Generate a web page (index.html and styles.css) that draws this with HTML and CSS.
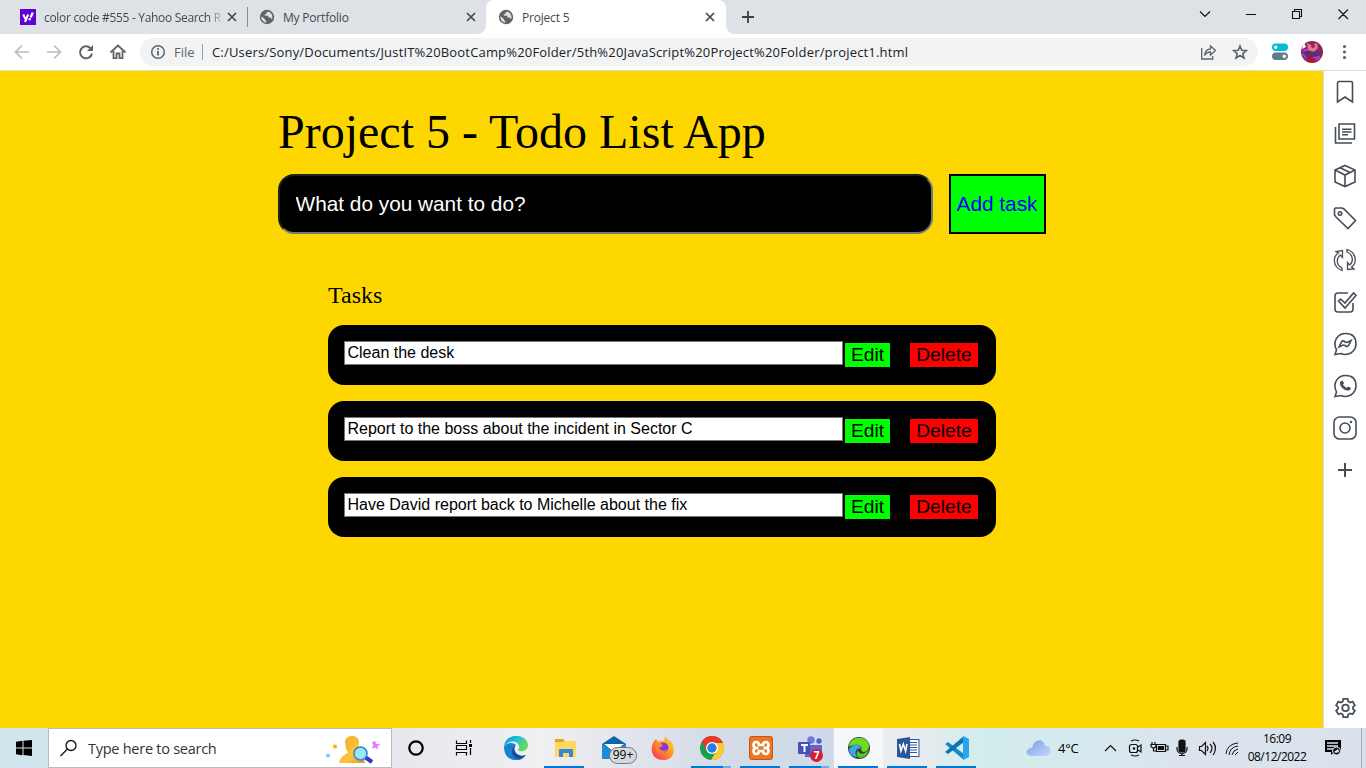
FILE: index.html
```html
<!DOCTYPE html>
<html lang="en">
<head>
<meta charset="utf-8">
<title>Project 5</title>
<link rel="stylesheet" href="styles.css">
</head>
<body>
<svg class="defs" width="0" height="0">
  <defs>
    <symbol id="globe" viewBox="0 0 16 16"><circle cx="8" cy="8" r="7.2" fill="#5f6368"/><path d="M9 2.500 7.300 4v1.300H5.800v1.500h3.600v1.700h1.700c.7 0 1 .6 1 1.200h1.200A5.800 5.800 0 0 0 9 2.500M2.400 7.200 6 10.300v.9L7.300 12v1.700A5.700 5.700 0 0 1 2.400 7.200" fill="#dee1e6"/></symbol>
    <symbol id="close" viewBox="0 0 10 10"><path d="m1 1 8 8M9 1 1 9" stroke="#45494d" stroke-width="1.7"/></symbol>
  </defs>
</svg>
<div class="screen">
  <header class="tabs">
    <div class="tab tab-first">
      <svg width="16" height="16" class="favicon"><rect width="16" height="16" fill="#5f01d1"/><path d="m3.200 5.500 2.300 4.500M8.200 5.500 5 13" stroke="#fff" stroke-width="2" fill="none"/><path d="m12.800 3.500-2.200 5" stroke="#fff" stroke-width="2.2"/><circle cx="9.700" cy="10.300" r="1.200" fill="#fff"/></svg>
      <span class="tab-title faded">color code #555 - Yahoo Search R</span>
      <svg class="x"><use href="#close"/></svg>
    </div>
    <i class="tab-rule"></i>
    <div class="tab tab-second">
      <svg class="favicon" width="16" height="16"><use href="#globe"/></svg>
      <span class="tab-title">My Portfolio</span>
      <svg class="x"><use href="#close"/></svg>
    </div>
    <div class="tab tab-active">
      <svg class="favicon" width="16" height="16"><use href="#globe"/></svg>
      <span class="tab-title">Project 5</span>
      <svg class="x"><use href="#close"/></svg>
    </div>
    <svg class="new-tab" width="12" height="12"><path d="M6 0v12M0 6h12" stroke="#3c4043" stroke-width="1.8"/></svg>
    <svg class="window-controls" width="160" height="34" fill="none" stroke="#111" stroke-width="1.1"><path d="m6 11.500 5 5 5-5M52 14.500h10M98.500 11.500h7v7h-7zM100.500 11V9.500h7v7H106M144.500 9.500l9.500 9.500M154 9.500 144.500 19"/></svg>
  </header>
  <div class="toolbar">
    <svg class="nav-icons" width="140" height="36" fill="none" stroke-width="1.7"><g stroke="#babcbe"><path d="M29 18H16M22 11.500 15.500 18l6.500 6.500M47 18h13M54 11.500l6.500 6.500-6.500 6.500"/></g><path d="M90.500 14.200a6 6 0 1 0 1.500 5.300" stroke="#5f6368" stroke-width="2"/><path d="M93 11v6h-6z" fill="#5f6368"/><path d="M113.500 17v7.200h3V19.500h3v4.700h3V17M110.500 18.500l7.500-7 7.500 7" stroke="#5f6368" stroke-width="1.8"/></svg>
    <div class="address">
      <svg class="info" width="16" height="16" fill="none" stroke="#5f6368" stroke-width="1.500"><circle cx="8" cy="8" r="6.300"/><path d="M8 7v4.500M8 4v1.700" stroke-width="1.800"/></svg>
      <span class="scheme">File</span><i class="address-rule"></i>
      <span class="url">C:/Users/Sony/Documents/JustIT%20BootCamp%20Folder/5th%20JavaScript%20Project%20Folder/project1.html</span>
      <svg class="address-actions" width="50" height="20" fill="none" stroke="#5f6368" stroke-width="1.300"><path d="M1.700 6v11h11v-3M4.500 13.500c.5-4 2.500-6.500 6-6.500V4l5 4.500-5 4.500v-3c-3 0-4.500 1-6 3.500z"/><path d="m40 4 1.800 4.300 4.500.3-3.500 3 1.200 4.400-4-2.500-4 2.500 1.200-4.400-3.500-3 4.500-.3z" stroke-width="1.600"/></svg>
    </div>
    <svg class="extensions" width="94" height="36"><rect x="0" y="9.500" width="16" height="7.500" rx="3.700" fill="#00bcd4"/><circle cx="3.700" cy="13.300" r="1.700" fill="#fff"/><rect y="18.500" width="16" height="7.500" rx="3.700" fill="#607d8b"/><circle cx="12.300" cy="22.300" r="1.700" fill="#fff"/><circle cx="40" cy="18" r="11" fill="#8d2355"/><path d="m31 15 6 0-4 5 3 7-6-6zM49 14l-4 5 4 5-5 3-4-4z" fill="#a637d8"/><path d="m35 9 4 2 6-2 1 5-4 4-6-2z" fill="#d77b9b"/><path d="m30 18 5-1 4 3 4-3 6 1-3 4-5 1-7-1z" fill="#4f3370"/><path d="M35 24.500h8l2 3-5 1-5-1z" fill="#c1101f"/><path d="m32 9 2 4-4 2z" fill="#fff"/><circle cx="41" cy="12" r="2" fill="#a12962"/><g fill="#5f6368"><circle cx="72.500" cy="12.500" r="1.600"/><circle cx="72.500" cy="18" r="1.600"/><circle cx="72.500" cy="23.500" r="1.600"/></g></svg>
  </div>
  <div class="viewport">
    <main>
      <h1>Project 5 - Todo List App</h1>
      <form class="new-task"><input class="new-input" placeholder="What do you want to do?"><button type="button" class="add">Add task</button></form>
      <section class="tasks">
        <h2>Tasks</h2>
        <div class="task"><input class="task-text" value="Clean the desk"><button class="edit">Edit</button><button class="delete">Delete</button></div>
        <div class="task"><input class="task-text" value="Report to the boss about the incident in Sector C"><button class="edit">Edit</button><button class="delete">Delete</button></div>
        <div class="task"><input class="task-text" value="Have David report back to Michelle about the fix"><button class="edit">Edit</button><button class="delete">Delete</button></div>
      </section>
    </main>
    <aside>
      <svg viewBox="0 0 24 24"><path d="M4.500 22V3a1.500 1.500 0 0 1 1.500-1.500h12A1.500 1.500 0 0 1 19.500 3v19L12 17z"/></svg>
      <svg viewBox="0 0 24 24"><path d="M6 2h15.500v15H6zM2.500 5v16H19M9 7.300h9.500M9 10h9.500M9 12.700h6"/></svg>
      <svg viewBox="0 0 24 24"><path d="m12 1.500 10 4.500v12L12 22.500 2 18V6zM2 6l10 5 10-5M12 11v11M7 3.800 17 8.500"/></svg>
      <svg viewBox="0 0 24 24"><path d="M2.500 2H9l2 1 11.500 11.500-7.500 8L3 11l-1.500-2V3z"/><circle cx="7" cy="7.500" r="1.700"/></svg>
      <svg viewBox="0 0 24 24"><path d="M9 22.500C-1 19 0 8 5.500 5L3 3.500l6.500-1v7L7.500 7C3 10 3 17 9 20zM14 1.500c10 3 10 14 4.500 17.500l2.500 2-6.500.500v-7l2 2.500C21 14 20 6 14 4z" stroke-width="1.300"/></svg>
      <svg viewBox="0 0 24 24"><path d="M15 3H5a3 3 0 0 0-3 3v13a3 3 0 0 0 3 3h12a3 3 0 0 0 3-3v-6M5.500 11l2-2 4.500 4 8.500-10 2.500 2.500L12 18z"/></svg>
      <svg viewBox="0 0 24 24"><path d="m2 22.500 1.500-4.500C-1 9 5 1.500 12.500 1.500S23 6 23 12s-5 10.500-11 10.500c-2 0-3-.5-4-1z"/><path d="m6 15 2.500-5c1-1.500 2.500-1.500 3.500 0l2 .5 4-2-2.500 5c-1 1.500-2.500 1.500-3.500 0l-2-.5z"/></svg>
      <svg viewBox="0 0 24 24"><path d="m2 22.500 1.500-4.500C-1 9 5 1.500 12.500 1.500S23 6 23 12s-5 10.500-11 10.500c-2 0-3-.5-4-1z"/><path d="M8 7c-4 3 4 12 9 9l1-2-3-1.500-1.500 1.500L10 11l1-2-1.500-2.500z" fill="#454d57" stroke="none"/></svg>
      <svg viewBox="0 0 24 24"><rect x="1" y="1" width="22" height="22" rx="5.500"/><circle cx="12" cy="12" r="5"/><circle cx="18" cy="6" r=".5"/></svg>
      <svg viewBox="0 0 24 24"><path d="M12 5v14M5 12h14" stroke-width="2"/></svg>
      <svg class="settings" viewBox="0 0 24 24"><path d="m9.500 2h5l.6 3 2.300 1.300 2.800-1 2.500 4.200-2.200 2v2l2.200 2-2.500 4.200-2.800-1-2.300 1.300-.6 3h-5l-.6-3-2.300-1.300-2.800 1-2.500-4.200 2.200-2v-2l-2.200-2 2.500-4.200 2.800 1L8.900 5z" stroke-width="2"/><circle cx="12" cy="12.500" r="3.700" stroke-width="2"/></svg>
    </aside>
  </div>
  <footer>
    <svg class="start" width="48" height="40"><path d="m16 13.700 6.500-.9v6.700H16zM23.500 12.700 32 12v7.500h-8.500zM16 20.500h6.500v6.700l-6.500-.9zM23.500 20.500H32V28l-8.500-.9z"/></svg>
    <div class="search">
      <svg width="18" height="18" fill="none" stroke="#111" stroke-width="1.300"><circle cx="11" cy="6.500" r="5"/><path d="M7.500 10 .5 17"/></svg>
      <span class="search-text">Type here to search</span>
      <svg class="search-art" width="56" height="32" viewBox="0 0 56 32"><defs><linearGradient id="person" y2="1"><stop stop-color="#f2a92f"/><stop offset=".6" stop-color="#ffc338"/><stop offset="1" stop-color="#e58d35"/></linearGradient></defs><path d="M14 31c1-5 4-8 9-10l-2-4-1-7c0-8 14-8 14 0 0 5-1 9-4 10 6 2 9 5 10 11z" fill="url(#person)"/><path d="m40 25 7 5" stroke="#3437c8" stroke-width="4"/><circle cx="35.500" cy="21.500" r="6.500" fill="#9be5fb" stroke="#3186cc" stroke-width="1.500"/><circle cx="10" cy="14.500" r="2" fill="#ffad09"/><circle cx="3" cy="23.500" r="2" fill="#62d7eb"/><path d="m50 9 1.500 3 4 .5-3 2 .5 3-3-2-3.500 1 2-3-1.500-3z" fill="#e477fa"/></svg>
    </div>
    <svg class="system-apps" width="99" height="40" fill="none" stroke="#000"><circle cx="24" cy="20" r="6.700" stroke-width="2.200"/><path d="M64.500 12.500v3h10v-3M64.500 27.500v-3h10v3M64.500 17.500h10v4h-10zM78.500 12v3M78.500 20v7" stroke-width="1.200"/><rect x="77" y="16" width="3" height="3" fill="#000" stroke="none"/></svg>
    <div class="apps">
      <div class="app"><svg viewBox="0 0 24 24"><defs><linearGradient id="edge" y2=".5"><stop stop-color="#098bd0"/><stop offset=".5" stop-color="#25bfdc"/><stop offset="1" stop-color="#68dc55"/></linearGradient></defs><path d="M0 11C1-4 23-3 24 9c0 5-4 7-9 6-2-1 1-2 0-5C13 4 4 4 0 11z" fill="url(#edge)"/><path d="M0 11C3 6 9 6 12 9c-4 2-4 9 3 11 3 1 6-1 7-1-4 6-11 7-17 3-3-2-5-6-5-11z" fill="#1680d1"/><path d="M12 9c-6 3-5 13 3 14 3-1 5-2 7-4-7 3-15-4-10-10z" fill="#124c96"/></svg></div>
      <div class="app open"><svg viewBox="0 0 24 24"><path d="M2 3h8l2 2h11v16H2z" fill="#e5a512"/><path d="M2 6h8l2-1h11v16H2z" fill="#ffd766"/><path d="M6 21v-8h14v8h-4v-4h-6v4z" fill="#3687d3"/></svg></div>
      <div class="app"><svg viewBox="0 0 24 24"><path d="M0 8 12 0l12 8v15H0z" fill="#0965ac"/><path d="M2 8h20l-10 8z" fill="#fff"/><path d="m0 8 12 8 12-8v15H0z" fill="#198ddb"/></svg><span class="mail-count">99+</span></div>
      <div class="app"><svg viewBox="0 0 24 24"><defs><linearGradient id="fox" x1="1" x2="0" y2="1"><stop stop-color="#ffe239"/><stop offset=".5" stop-color="#ff8a28"/><stop offset="1" stop-color="#f4246e"/></linearGradient></defs><path d="m3 5 2-2 2 3 2-1h4l1-5 4 5 1-1 3 5c3 10-3 15-10 15C1 24-2 13 3 5z" fill="url(#fox)"/><circle cx="12.500" cy="11.500" r="4.800" fill="#7e38df"/><path d="m6 8 5 0 1 2-4 2c2 3 5 4 8 1-2 6-12 5-12-2z" fill="#ff8031"/></svg></div>
      <div class="app open grouped"><svg viewBox="0 0 24 24"><circle cx="12" cy="12" r="12" fill="#169e51"/><path d="M1.600 6A12 12 0 0 1 23 7H12l-5 8z" fill="#e7382e"/><path d="M12 7h11a12 12 0 0 1-12 17l6-10z" fill="#fdcb2c"/><circle cx="12" cy="12" r="6" fill="#fff"/><circle cx="12" cy="12" r="4.700" fill="#287ce8"/></svg></div>
      <div class="app open"><svg viewBox="0 0 24 24"><rect x=".5" y=".5" width="23" height="23" rx="2" fill="#f07522" stroke="#bd581a"/><path d="M9.500 12H8C3 12 4 6 7 6c2 0 3 1 3 3h4c0-2 1-3 3-3 3 0 4 6-1 6h-1.500H16c5 0 4 6 1 6-2 0-3-1-3-3h-4c0 2-1 3-3 3-3 0-4-6 1-6z" fill="none" stroke="#fff" stroke-width="2.700"/></svg></div>
      <div class="app open grouped"><svg viewBox="0 0 24 24"><circle cx="13" cy="4" r="3.700" fill="#7277de"/><circle cx="21" cy="5" r="2.700" fill="#565cc9"/><path d="M7 9h17v8l-4 4H7z" fill="#6065ca"/><rect y="6" width="12" height="12" rx="1" fill="#484fb7"/><path d="M3 9h7M6.500 9v7" stroke="#fff" stroke-width="2"/></svg><span class="teams-count">7</span></div>
      <div class="app open current"><svg viewBox="0 0 24 24"><circle cx="12" cy="12" r="11" fill="#343d40"/><path d="M2 11C3-1 21-1 22 10c0 5-6 8-8 4 3-4-5-8-12-3z" fill="#71db20"/><path d="M2 13c5-6 12-5 12 0-5-2-7 4-4 8-4 1-8-4-8-8z" fill="#33a8ea"/><path d="M11 14c1 6 8 4 11-1-1 6-5 9-9 9-4-1-4-5-2-8z" fill="#55c822"/></svg></div>
      <div class="app open"><svg viewBox="0 0 24 24"><rect x="12" y="3.500" width="11" height="17" fill="#fff" stroke="#2b579a"/><path d="M14 6.500h7M14 9h7M14 11.500h7M14 14h7M14 16.500h7" stroke="#2b579a"/><path d="M1 3 14 1v22L1 21z" fill="#2b579a"/><path d="m3.500 8 1.500 7 2.300-7 2.300 7L11 8" fill="none" stroke="#fff" stroke-width="1.600"/></svg></div>
      <div class="app open"><svg viewBox="0 0 24 24"><path d="m0 8 3-2 16 12v6z" fill="#1688ca"/><path d="m0 16 3 2L19 6V0z" fill="#0873b5"/><path d="m18 0 6 3v18l-6 3z" fill="#27a4ec"/></svg></div>
    </div>
    <svg class="cloud" width="26" height="18"><defs><linearGradient id="sky" y2="1"><stop stop-color="#7e9ee9"/><stop offset="1" stop-color="#c2d6fc"/></linearGradient></defs><path d="M5 17C-2 16 0 9 6 9 8-1 18-1 19 7c6-1 8 9 1 10z" fill="url(#sky)"/></svg>
    <span class="temperature">4°C</span>
    <svg class="tray" width="140" height="40" fill="none" stroke="#111" stroke-width="1.200"><path d="m5 23 5.500-5.500L16 23"/><rect x="29.500" y="16.500" width="8" height="8" rx="2"/><path d="m38 19 3-2v7l-3-2M31 13q4-2 8 0M31 27q4 2 8 0"/><circle cx="34" cy="20.500" r=".7"/><path d="M56.500 16.500h9v7h-9zM66 18h2v4h-2M52 14v2M55 14v2M51 16.500h5v2l-2.500 2-2.500-2zM53.500 20v3h3"/><path d="M58.500 18.500h5v3h-5z" fill="#111"/><rect x="79" y="12" width="6" height="12" rx="2" fill="#111"/><path d="M77 19v2c0 6 10 6 10 0v-2M82 25v3M79 27.500h6"/><path d="M99.500 18.500h2l4-4v12l-4-4h-2zM107 18q2 2 0 5M110 16q4 4 0 9M113 14q5 6 0 13"/><path d="M126 26q1-10 12-11M129 27q1-8 9-9M132 27q1-5 6-6M135 27l3-3" stroke-width="1"/></svg>
    <div class="clock"><span>16:09</span><span>08/12/2022</span></div>
    <svg class="notifications" width="18" height="18"><path d="M1 1h16v12h-6l-4 3v-3H1z"/><path d="M3 4h11M3 7h11M3 10h6" stroke="#e1e5ed" stroke-width="1.300"/><circle cx="12.500" cy="12" r="4" fill="#111" stroke="#dce3ec"/><path d="m10 13 4-3 1 3-3 1z" fill="#dce3ec"/></svg>
    <i class="show-desktop"></i>
  </footer>
</div>
</body>
</html>
```
FILE: styles.css
```css
*{box-sizing:border-box}
body{margin:0;overflow:hidden}
.defs{position:absolute}
.screen{width:1366px;height:768px;display:flex;flex-direction:column;font-family:"Open Sans","Noto Sans",sans-serif}
svg{display:block;flex-shrink:0}
.tabs{height:34px;background:#dee1e6;display:flex;align-items:center}
.tab{display:flex;align-items:center;height:34px;font-size:12px;color:#45494d}
.tab-first{width:247px;padding:0 10px 0 20px}
.tab-second{width:238px;padding:0 10px 0 11px}
.tab-active{width:240px;padding:0 11px 0 12px;background:#fff;border-radius:8px 8px 0 0;position:relative}
.tab-active:before,.tab-active:after{content:"";position:absolute;bottom:0;width:8px;height:8px}
.tab-active:before{left:-8px;background:radial-gradient(circle at 0 0,transparent 7.5px,#fff 8px)}
.tab-active:after{right:-8px;background:radial-gradient(circle at 100% 0,transparent 7.5px,#fff 8px)}
.favicon{margin-right:8px}
.tab-title{white-space:nowrap;letter-spacing:-.2px}
.faded{width:178px;letter-spacing:-.31px;-webkit-mask-image:linear-gradient(90deg,#000 164px,rgba(0,0,0,.15) 178px)}
.x{width:10px;height:10px;margin-left:auto}
.tab-rule{width:1px;height:20px;background:#888b90}
.new-tab{margin-left:16px}
.window-controls{margin-left:auto;margin-right:12px}
.toolbar{height:37px;display:flex;align-items:center;background:#fff;border-bottom:1px solid #d9dbdf}
.address{width:1118px;height:28px;border-radius:14px;background:#f1f3f4;display:flex;align-items:center;font-size:13px;color:#202124}
.info{margin-left:10px}
.scheme{margin-left:8px;color:#5f6368;width:21px;white-space:nowrap}
.address-rule{width:1px;height:16px;background:#9b9ea3;margin:0 9px 0 7px}
.url{white-space:nowrap;letter-spacing:.178px}
.address-actions{margin-left:auto;margin-right:8px}
.extensions{margin-left:auto}
.viewport{height:657px;display:flex}
main{width:1323px;background:#ffd700;padding:33px 277px 0 278px}
h1,h2{font-family:"Liberation Serif",serif;font-weight:400;margin:0}
h1{font-size:48px;line-height:55px}
.new-task{display:flex;gap:16px;margin-top:15px;height:60px}
.new-input{width:655px;background:#000;border:2px inset #767676;border-radius:16px;padding:0 16px 0 15.5px;color:#fff;font:20.8px "Liberation Sans",sans-serif}
.new-input::placeholder{color:#fff}
.add{width:97px;border:2px solid #000;background:#0f0;color:#00f;padding:0 1px 0 0;font:20.8px "Liberation Sans",sans-serif}
.tasks{padding:48px 50px 0}
h2{font-size:24px;line-height:27px;margin-bottom:16px}
.task{width:668px;height:60px;background:#000;border-radius:16px;padding:16px;display:flex;align-items:flex-start;margin-bottom:16px}
.task-text{width:499px;height:24px;border:1px solid #767676;background:#fff;padding:1px 3px 1px 2.5px;font:16px "Liberation Sans",sans-serif;color:#000}
.task button{border:0;height:24px;margin-top:2px;padding:0;font:19.2px/24px "Liberation Sans",sans-serif;color:#000}
.task .edit{width:45px;background:#0f0;margin-left:2px}
.task .delete{width:68px;background:red;margin-left:20px}
aside{width:43px;border-left:1px solid #ddd;display:flex;flex-direction:column;align-items:center;gap:18px;padding:9px 0 10px;background:#fff}
aside svg{width:24px;height:24px;fill:none;stroke:#454d57;stroke-width:1.600}
aside .settings{width:21px;height:21px;margin-top:auto}
footer{height:40px;display:flex;align-items:center;background:linear-gradient(90deg,#cee6ec 0,#e6e8ee 390px,#f0eff2 540px,#d7dde8 700px,#ced9e8 830px,#edeff2 860px,#e8ebef 920px,#d2eded 980px,#d6e9ee 1080px,#dce3ed 1200px,#d9e2ec)}
.search{width:344px;height:40px;background:#fff;border:1px solid #bbb;display:flex;align-items:center;padding:0 10px 0 11px}
.search-text{font-size:14.500px;color:#333;margin-left:10px;letter-spacing:-.26px;white-space:nowrap}
.search-art{margin-left:auto}
.apps{display:flex}
.app{width:49px;height:40px;display:flex;justify-content:center;align-items:center;position:relative}
.app>svg{width:24px;height:24px}
.app.open:after{content:"";position:absolute;left:4px;right:5px;bottom:0;height:2px;background:#0078d7}
.app.grouped:after{background:linear-gradient(90deg,#0078d7 80%,#6dafe4 80%)}
.current{background:#f6f7fa}
.mail-count{position:absolute;left:20px;top:19px;width:28px;height:17px;border:1px solid #777;border-radius:9px;background:#d7dadd;text-align:center;font-size:12px;line-height:14px}
.teams-count{position:absolute;left:25px;top:21px;width:13px;height:13px;border-radius:50%;background:#cf2038;color:#fff;text-align:center;font-size:10px;font-weight:700;line-height:13px}
.cloud{margin-left:45px}
.temperature{font-size:13px;margin-left:6px;width:24px;white-space:nowrap;letter-spacing:-.3px}
.tray{margin-left:18px}
.clock{width:70px;margin-left:2px;font-size:12px;line-height:18px;display:flex;flex-direction:column;align-items:center;letter-spacing:-.5px}
.notifications{margin-left:12px}
.show-desktop{width:1px;height:40px;background:#a6b1bd;margin-left:auto;margin-right:4px}
```
